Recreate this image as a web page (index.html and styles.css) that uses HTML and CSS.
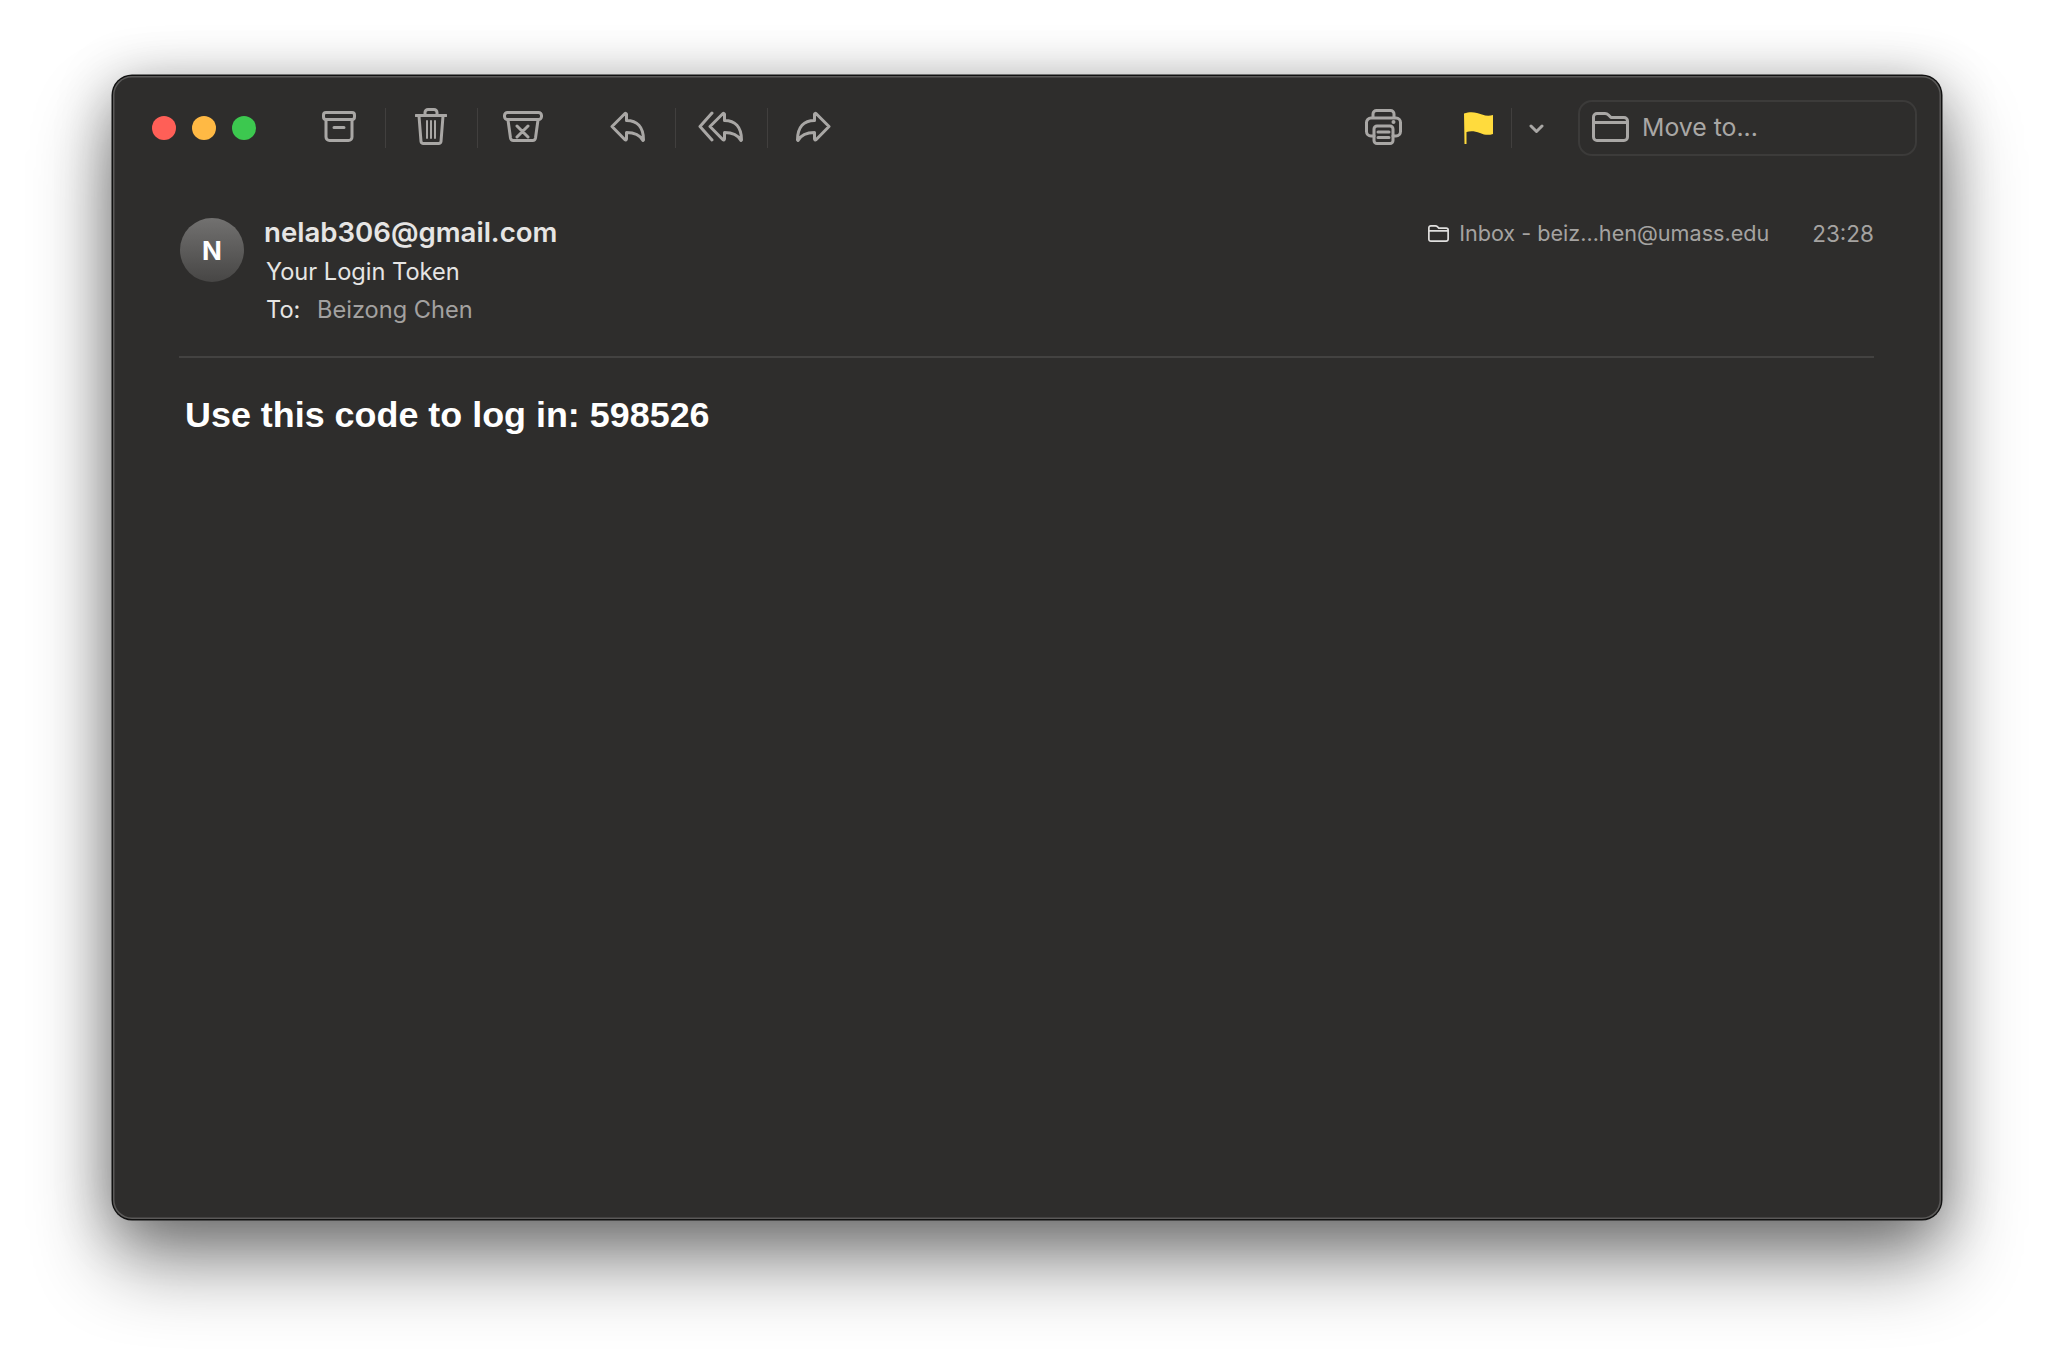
FILE: index.html
```html
<!DOCTYPE html>
<html lang="en">
<head>
    <meta charset="UTF-8">
    <title>Your Login Token</title>
    <link rel="stylesheet" href="styles.css">
</head>
<body>
    <div class="window">
        <div class="toolbar">
            <div class="lights">
                <span class="light red"></span>
                <span class="light yellow"></span>
                <span class="light green"></span>
            </div>

            <div class="tool-group first-group">
                <div class="tool">
                    <svg class="icon" width="34" height="31" viewBox="0 0 34 31">
                        <rect x="1.5" y="1.5" width="31" height="7" rx="2.5"/>
                        <path d="M4 9v17a3.5 3.5 0 0 0 3.5 3.5h19a3.5 3.5 0 0 0 3.5-3.5V9M12 16.5h10"/>
                    </svg>
                </div>
                <div class="tool">
                    <svg class="icon" width="32" height="37" viewBox="0 0 32 37">
                        <path d="M10 6.500V4.500a3 3 0 0 1 3-3h6a3 3 0 0 1 3 3v2M1 7.500h30M4 8l2 25.500a2.500 2.500 0 0 0 2.500 2h15a2.500 2.500 0 0 0 2.500-2L28 8"/>
                        <path class="thin" d="M12 13v17M16 13v17M20 13v17"/>
                    </svg>
                </div>
                <div class="tool">
                    <svg class="icon" width="40" height="31" viewBox="0 0 40 31">
                        <rect x="1.500" y="1.500" width="37" height="7" rx="3"/>
                        <path d="M5 9l2.500 18a3 3 0 0 0 3 2.500h19a3 3 0 0 0 3-2.500L35 9M14 15l11 11M25 15L14 26"/>
                    </svg>
                </div>
            </div>

            <div class="tool-group second-group">
                <div class="tool reply-tool">
                    <svg class="icon" width="35" height="31" viewBox="0 0 35 31">
                        <path d="M2 15.500L15 2.500a1 1 0 0 1 1.500.8V9.500C27 9.500 33.500 16 33.500 29l-.5.5C30 24 25 21.500 16.500 21.500V28a1 1 0 0 1-1.500.8Z"/>
                    </svg>
                </div>
                <div class="tool">
                    <svg class="icon" width="45" height="31" viewBox="0 0 45 31">
                        <path d="M14 2L2 15.500 14 29"/>
                        <path d="M12 15.500L25 2.500a1 1 0 0 1 1.500.8V9.500C37 9.500 43.500 16 43.500 29l-.5.5C40 24 35 21.500 26.500 21.500V28a1 1 0 0 1-1.500.8Z"/>
                    </svg>
                </div>
                <div class="tool forward-tool">
                    <svg class="icon" width="35" height="31" viewBox="0 0 35 31">
                        <path d="M33 15.500L20 2.500a1 1 0 0 0-1.500.8V9.500C8 9.500 1.500 16 1.500 29l.5.5C5 24 10 21.500 18.500 21.500V28a1 1 0 0 0 1.500.8Z"/>
                    </svg>
                </div>
            </div>

            <div class="tool print-tool">
                <svg class="icon" width="37" height="36" viewBox="0 0 37 36">
                    <path d="M8 9V5a3.500 3.500 0 0 1 3.500-3.500h14A3.500 3.500 0 0 1 29 5v4M9 27H6a4.500 4.500 0 0 1-4.500-4.500v-9A4.500 4.500 0 0 1 6 9h25a4.500 4.500 0 0 1 4.500 4.500v9A4.500 4.500 0 0 1 31 27h-3"/>
                    <rect x="9" y="17" width="19" height="17.500" rx="3"/>
                    <path d="M13 23h11M13 28.500h11"/>
                    <circle class="dot" cx="28.500" cy="13" r="2"/>
                </svg>
            </div>
            <div class="tool flag-tool">
                <svg width="29" height="32" viewBox="0 0 29 32">
                    <path class="flag" d="M0 1.500C7-1 13 .5 18 2.500c4 1.500 7.500 1.500 11 .5v19c-4.500 1.500-8.500 1-13-1-5-2-9.500-2.500-13.500-1V32H.5Z"/>
                </svg>
            </div>
            <div class="tool chevron-tool">
                <svg class="icon" width="15" height="9" viewBox="0 0 15 9">
                    <path d="M2 2l5.500 5.500L13 2"/>
                </svg>
            </div>
            <div class="move-box">
                <svg class="icon" width="37" height="30" viewBox="0 0 37 30">
                    <path d="M1.500 25V5A3.500 3.500 0 0 1 5 1.500h8c1.500 0 2.500.5 3.500 1.500l2.500 2.500h13A3.500 3.500 0 0 1 35.500 9v16a3.500 3.500 0 0 1-3.500 3.500H5A3.500 3.500 0 0 1 1.500 25ZM1.500 10.500h34"/>
                </svg>
                <span class="move-label">Move to...</span>
            </div>
        </div>

        <div class="mail-head">
            <div class="avatar">N</div>
            <div class="mail-info">
                <div class="sender">nelab306@gmail.com</div>
                <div class="subject">Your Login Token</div>
                <div class="to-line"><span class="to-label">To:</span> <span class="to-name">Beizong Chen</span></div>
            </div>
            <div class="mail-meta">
                <svg class="small-folder" width="21" height="17" viewBox="0 0 37 30">
                    <path d="M1.500 25V5A3.500 3.500 0 0 1 5 1.500h8c1.500 0 2.500.5 3.500 1.500l2.500 2.500h13A3.500 3.500 0 0 1 35.500 9v16a3.500 3.500 0 0 1-3.500 3.500H5A3.500 3.500 0 0 1 1.500 25ZM1.500 10.500h34"/>
                </svg>
                <span class="mailbox">Inbox - beiz…hen@umass.edu</span>
                <span class="time">23:28</span>
            </div>
        </div>

        <div class="mail-body">Use this code to log in: 598526</div>
    </div>
</body>
</html>
```

FILE: styles.css
```css
body {
    margin: 0;
    padding: 76px 113px 0;
    height: 1368px;
    box-sizing: border-box;
    background: white;
    overflow: hidden;
    font-family: Inter, 'Noto Sans', sans-serif;
}

.window {
    height: 1143px;
    background: #2e2d2c;
    border-radius: 19px;
    box-shadow:
        inset 0 0 0 1.5px #5a5958,
        0 0 0 1.5px #111,
        0 42px 80px rgba(0, 0, 0, 0.46),
        0 8px 56px rgba(0, 0, 0, 0.3);
}

.toolbar {
    display: flex;
    align-items: center;
    height: 56px;
    padding: 24px 24px 0 39px;
}

.lights {
    display: flex;
    gap: 16px;
}

.light {
    width: 24px;
    height: 24px;
    border-radius: 50%;
}

.red { background: #ff5f57; }
.yellow { background: #ffb944; }
.green { background: #3cc84f; }

.tool-group {
    display: flex;
}

.first-group {
    margin-left: 37px;
}

.second-group {
    margin-left: 14px;
}

.tool {
    display: flex;
    align-items: center;
    justify-content: center;
    box-sizing: border-box;
    width: 92px;
    height: 40px;
}

.tool + .tool {
    padding-right: 2px;
    border-left: 1px solid #413f3e;
}

.reply-tool {
    padding-right: 4px;
}

.tool + .forward-tool {
    padding-right: 0;
}

.icon {
    margin-bottom: 3px;
    fill: none;
    stroke: #a9a7a5;
    stroke-width: 3;
    stroke-linecap: round;
    stroke-linejoin: round;
}

.icon .thin {
    stroke-width: 2;
}

.icon .dot {
    fill: #a9a7a5;
    stroke: none;
}

.print-tool {
    margin-left: auto;
    margin-right: 15px;
    padding-right: 2px;
}

.print-tool + .tool {
    padding-right: 0;
    border-left: none;
}

.flag-tool {
    width: 66px;
}

.flag {
    fill: #ffdb3d;
}

.chevron-tool {
    width: 52px;
}

.chevron-tool .icon {
    margin-bottom: 0;
}

.move-box {
    display: flex;
    align-items: center;
    gap: 13px;
    box-sizing: border-box;
    width: 339px;
    height: 56px;
    margin-left: 15px;
    padding-left: 12px;
    border: 2px solid #3c3b3a;
    border-radius: 14px;
    color: #a9a7a5;
    font-size: 24.800px;
}

.move-label {
    margin-bottom: 3px;
}

.mail-head {
    display: flex;
    margin: 62px 67px 0 66px;
    height: 138px;
    border-bottom: 2px solid #434241;
}

.avatar {
    display: flex;
    align-items: center;
    justify-content: center;
    flex-shrink: 0;
    margin-left: 1px;
    width: 64px;
    height: 64px;
    border-radius: 50%;
    background: linear-gradient(#727170, #474645);
    color: white;
    font-size: 26px;
    font-weight: 700;
}

.mail-info {
    margin-left: 20px;
    color: #e6e5e4;
    font-size: 23.600px;
    line-height: 38.500px;
}

.sender {
    margin-top: -5px;
    margin-bottom: 1px;
    font-size: 27.600px;
    font-weight: 600;
}

.subject,
.to-line {
    margin-left: 2px;
}

.to-name {
    margin-left: 10px;
    color: #a3a1a0;
}

.mail-meta {
    display: flex;
    align-items: center;
    align-self: flex-start;
    margin-left: auto;
    height: 30px;
    color: #a5a3a1;
    font-size: 22.500px;
}

.small-folder {
    fill: none;
    stroke: #e0dfde;
    stroke-width: 3;
    margin-right: 10px;
}

.mailbox {
    font-size: 21.600px;
}

.time {
    margin-left: 43px;
}

.mail-body {
    margin: 37px 0 0 72px;
    color: white;
    font-family: 'Liberation Sans', Arial, sans-serif;
    font-size: 35.900px;
    font-weight: 700;
}
```
